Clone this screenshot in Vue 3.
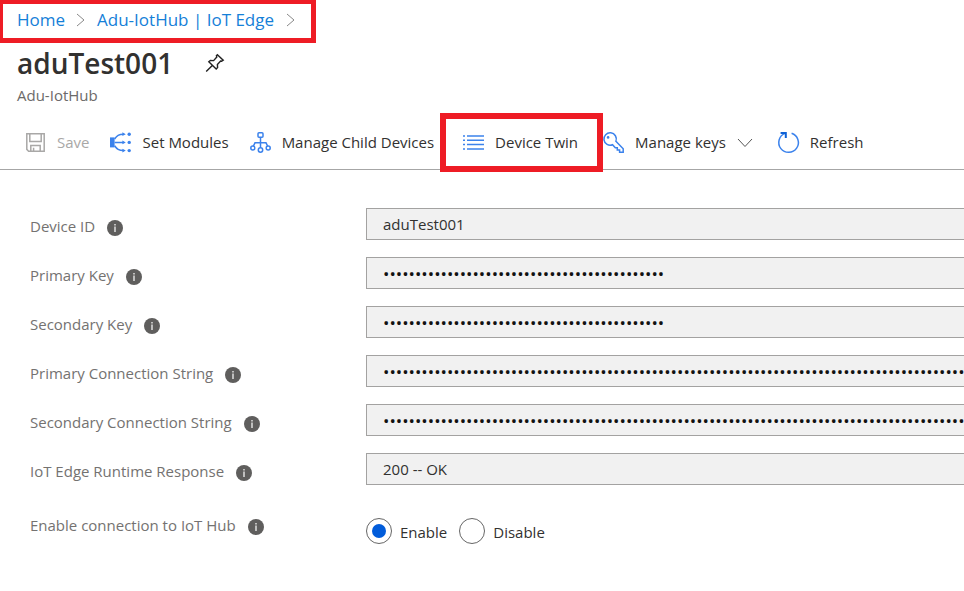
<script setup>
import { ref } from 'vue'

const key = 'k'.repeat(44)
const connection = 'c'.repeat(140)

const fields = [
  { id: 'device-id', label: 'Device ID', type: 'text', value: 'aduTest001' },
  { id: 'primary-key', label: 'Primary Key', type: 'password', value: key },
  { id: 'secondary-key', label: 'Secondary Key', type: 'password', value: key },
  { id: 'primary-connection', label: 'Primary Connection String', type: 'password', value: connection },
  { id: 'secondary-connection', label: 'Secondary Connection String', type: 'password', value: connection },
  { id: 'runtime-response', label: 'IoT Edge Runtime Response', type: 'text', value: '200 -- OK' },
]

const connectionState = ref('enable')
</script>

<template>
  <div class="page">
    <nav class="breadcrumb" aria-label="Breadcrumb">
      <a href="#">Home</a>
      <svg class="crumb-arrow" viewBox="0 0 9 14"><path d="M1 1l7 6-7 6" /></svg>
      <a href="#">Adu-IotHub | IoT Edge</a>
      <svg class="crumb-arrow" viewBox="0 0 9 14"><path d="M1 1l7 6-7 6" /></svg>
    </nav>

    <header class="heading">
      <div class="title-row">
        <h1>aduTest001</h1>
        <button class="pin" type="button" aria-label="Pin to dashboard">
          <svg viewBox="0 0 20 20">
            <path d="M12.4 1.8l5.8 5.4-1.6 1-1-.2-3.2 3.4.2 3.2-1.4 1.4-7.4-7.2 1.6-1.4 3.2.2 3.2-3.6-.4-1.2zM7.3 12.4L1.2 18.6" />
          </svg>
        </button>
      </div>
      <p class="subtitle">Adu-IotHub</p>
    </header>

    <div class="toolbar" role="toolbar">
      <button class="command" type="button" disabled>
        <svg class="icon save" viewBox="0 0 21 21">
          <path d="M1.8 1.8h17.4v17.4H3.6l-1.8-1.8zM4.8 2v7.4h11.4V2M5.8 19v-5.4h9.4V19M8.6 19v-3.2" />
        </svg>
        <span>Save</span>
      </button>
      <button class="command" type="button">
        <svg class="icon modules" viewBox="0 0 21 21">
          <path class="solid" d="M0 5.4h4.6v10H0z" />
          <path d="M4.6 7C7 3.6 8.6 2.2 13.6 2.2M4.6 10.4h9M4.6 13.8c2.4 3.4 4 4.8 9 4.8" />
          <path class="solid" d="M12.4.3l3.4 1.9-3.4 1.9zM12.4 8.5l3.4 1.9-3.4 1.9zM12.4 16.7l3.4 1.9-3.4 1.9z" />
          <circle class="solid" cx="19.2" cy="2.2" r="1.7" />
          <circle class="solid" cx="19.2" cy="10.4" r="1.7" />
          <circle class="solid" cx="19.2" cy="18.6" r="1.7" />
        </svg>
        <span>Set Modules</span>
      </button>
      <button class="command wide" type="button">
        <svg class="icon tree" viewBox="0 0 21 21">
          <rect x="8" y=".8" width="5" height="4.4" rx="1" />
          <path d="M10.5 5.2v10.6M3.4 14l1.6-3.2h11L17.6 14" />
          <circle cx="2.8" cy="16" r="2" />
          <circle cx="10.5" cy="18" r="2.2" />
          <circle cx="18.2" cy="16" r="2" />
        </svg>
        <span>Manage Child Devices</span>
      </button>
      <button class="command marked" type="button">
        <svg class="icon list" viewBox="0 0 21 21">
          <path d="M0 4h2M4 4h17M0 8.3h2M4 8.3h17M0 12.6h2M4 12.6h17M0 16.9h2M4 16.9h17" />
        </svg>
        <span>Device Twin</span>
      </button>
      <button class="command menu" type="button">
        <svg class="icon key" viewBox="0 0 21 21">
          <path d="M12.9 9.2l7.3 7.5v3.5h-3.6v-2.1h-2.3v-2.3h-2l-2.8-3.1A6.2 6.2 0 1 1 12.9 9.2z" />
          <circle class="solid" cx="5.1" cy="5.4" r="1.3" />
        </svg>
        <span>Manage keys</span>
        <svg class="chevron" viewBox="0 0 16 10"><path d="M1 1l7 7.5L15 1" /></svg>
      </button>
      <button class="command" type="button">
        <svg class="icon refresh" viewBox="0 0 21 21">
          <path d="M13.6 1.2A9.8 9.8 0 1 1 7 1.4" />
          <path class="arrow" d="M2.6.9h5.2v5" />
        </svg>
        <span>Refresh</span>
      </button>
    </div>

    <form class="form" @submit.prevent>
      <div v-for="field in fields" :key="field.id" class="row">
        <div class="label">
          <label :for="field.id">{{ field.label }}</label>
          <svg class="info" viewBox="0 0 16 16">
            <circle cx="8" cy="8" r="8" />
            <path d="M7.2 4h1.6v1.5H7.2zM7.2 6.6h1.6V12H7.2z" />
          </svg>
        </div>
        <input :id="field.id" class="field" :type="field.type" :value="field.value" autocomplete="off" readonly />
      </div>

      <div class="row choice-row">
        <div class="label">
          <span id="connection-label">Enable connection to IoT Hub</span>
          <svg class="info" viewBox="0 0 16 16">
            <circle cx="8" cy="8" r="8" />
            <path d="M7.2 4h1.6v1.5H7.2zM7.2 6.6h1.6V12H7.2z" />
          </svg>
        </div>
        <div class="choices" role="radiogroup" aria-labelledby="connection-label">
          <label class="choice">
            <input v-model="connectionState" type="radio" name="connection" value="enable" />
            <span>Enable</span>
          </label>
          <label class="choice">
            <input v-model="connectionState" type="radio" name="connection" value="disable" />
            <span>Disable</span>
          </label>
        </div>
      </div>
    </form>
  </div>
</template>

<style>
body {
  background: #fff;
  overflow-x: hidden;
}
</style>

<style scoped>
.page {
  font-family: "Open Sans", "Noto Sans", sans-serif;
  font-size: 15px;
  line-height: 20px;
  color: #323130;
}

svg {
  flex: none;
  fill: none;
  overflow: visible;
}

.breadcrumb {
  display: flex;
  align-items: center;
  gap: 11px;
  box-sizing: border-box;
  width: max-content;
  height: 43px;
  padding: 0 14px 2px;
  border: 5px solid #ee1c25;
  border-left-width: 3px;
  border-top-width: 4px;
  font-size: 17px;
}

.breadcrumb a {
  color: #1580d8;
  text-decoration: none;
}

.crumb-arrow {
  width: 9px;
  height: 14px;
  margin-right: 1px;
  stroke: #888;
}

.breadcrumb .crumb-arrow:last-child {
  margin: 0 2px 0 1px;
}

.heading {
  padding: 0 17px;
}

.title-row {
  display: flex;
  align-items: center;
  gap: 32px;
  height: 40px;
}

h1 {
  margin: 0;
  font-size: 28px;
  font-weight: 600;
  line-height: 40px;
}

.pin {
  padding: 0;
  border: 0;
  background: none;
  line-height: 0;
}

.pin svg {
  width: 20px;
  height: 20px;
  stroke: #222;
  stroke-width: 1.4;
}

.subtitle {
  margin: 0;
  padding: 2px 0 11px;
  color: #6c6a69;
}

.toolbar {
  display: flex;
  align-items: center;
  gap: 21px;
  height: 53px;
  padding-left: 25px;
  border-bottom: 1px solid #a6a6a6;
}

.command {
  position: relative;
  display: flex;
  align-items: center;
  gap: 11px;
  padding: 0;
  border: 0;
  background: none;
  color: #323130;
  font: inherit;
  white-space: nowrap;
}

.command span {
  padding-bottom: 2px;
}

.command:disabled {
  color: #a9a8a7;
}

.wide {
  padding-right: 8px;
}

.marked,
.menu {
  padding-right: 4px;
}

.marked::after {
  content: "";
  position: absolute;
  inset: -19px -21px -18px -23px;
  border: 6px solid #ee1c25;
}

.icon {
  width: 21px;
  height: 21px;
  stroke: #3b82ec;
  stroke-width: 1.5;
}

.icon .solid {
  fill: #3b82ec;
  stroke: none;
}

.icon .arrow {
  stroke: #0f62d6;
  stroke-width: 2;
}

.icon.save {
  stroke: #a9a8a7;
}

.chevron {
  width: 16px;
  height: 10px;
  stroke: #555;
}

.form {
  display: grid;
  gap: 17px;
  padding: 38px 0 0 30px;
}

.row {
  display: grid;
  grid-template-columns: 336px 1fr;
}

.label {
  display: flex;
  align-items: center;
  gap: 12px;
  padding-top: 4px;
  color: #747271;
}

.info {
  width: 16px;
  height: 16px;
  margin-top: 3px;
  fill: #5f5e5d;
}

.info path {
  fill: #d8d8d8;
}

.field {
  box-sizing: border-box;
  width: 100%;
  height: 32px;
  margin: 0;
  padding: 0 0 0 16px;
  border: 1px solid #a3a2a1;
  border-right: 0;
  border-radius: 0;
  outline: 0;
  background: #f1f1f1;
  color: #323130;
  font: inherit;
}

.field[type="password"] {
  color: #111;
  font-size: 17px;
}

.choice-row {
  padding-top: 10px;
}

.choice-row .label {
  padding: 0 0 6px;
}

.choices {
  display: flex;
  gap: 12px;
  padding-top: 6px;
}

.choice {
  display: flex;
  align-items: center;
  gap: 8px;
}

.choice input {
  appearance: none;
  display: grid;
  place-items: center;
  box-sizing: border-box;
  width: 26px;
  height: 26px;
  margin: 0;
  border: 1px solid #666;
  border-radius: 50%;
  background: #fff;
}

.choice input:checked::before {
  content: "";
  width: 14px;
  height: 14px;
  border-radius: 50%;
  background: #015cda;
}

.choice span {
  padding-top: 2px;
}
</style>
